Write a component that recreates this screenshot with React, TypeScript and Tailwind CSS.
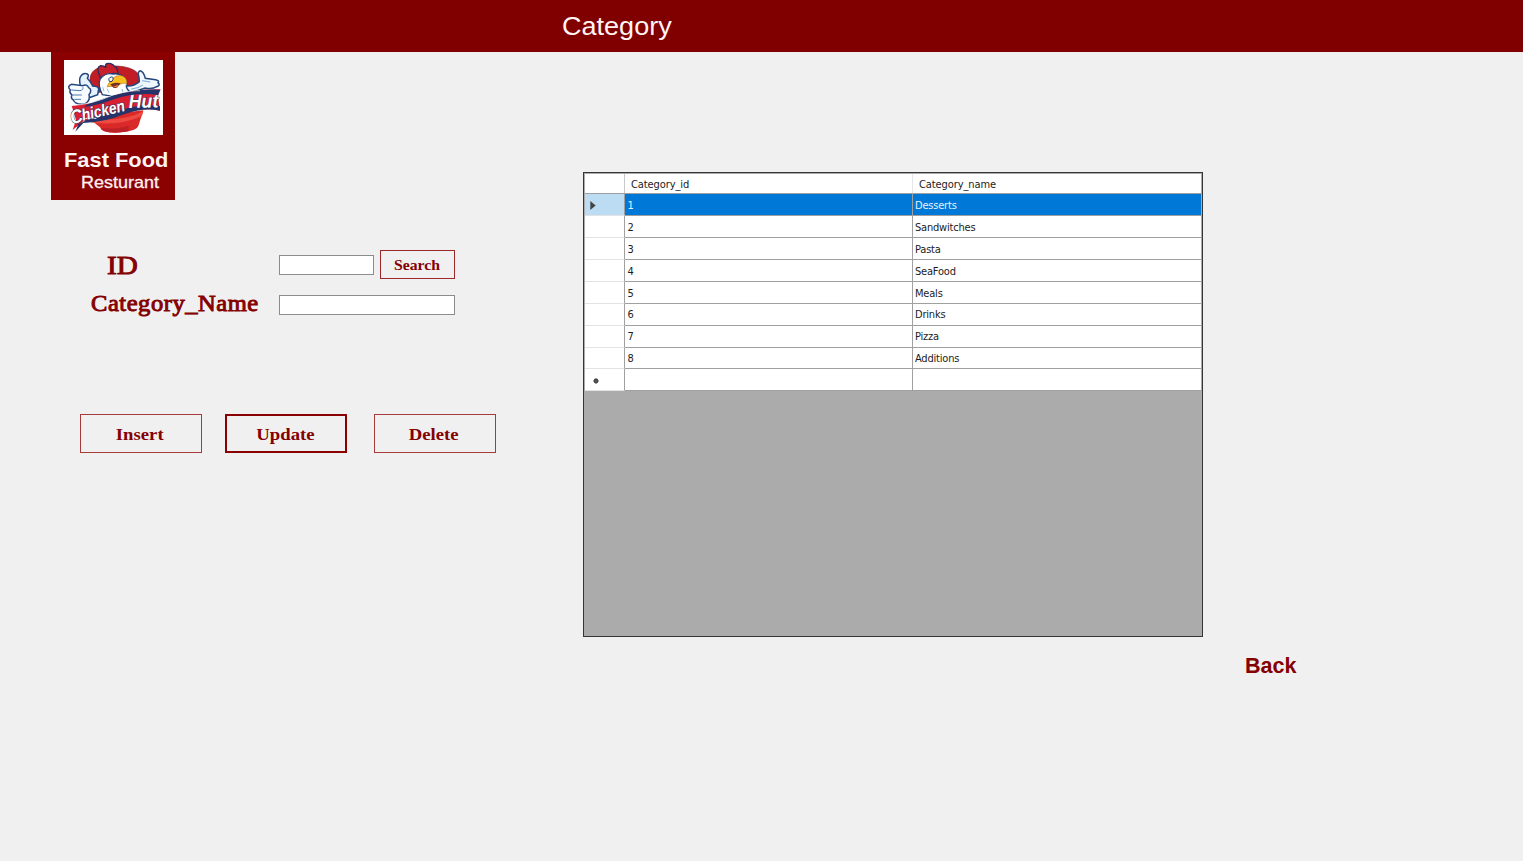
const rows: [string, string][] = [
  ['1', 'Desserts'],
  ['2', 'Sandwitches'],
  ['3', 'Pasta'],
  ['4', 'SeaFood'],
  ['5', 'Meals'],
  ['6', 'Drinks'],
  ['7', 'Pizza'],
  ['8', 'Additions'],
  ['', ''],
];

const serif = "font-['Liberation_Serif',serif] text-[#850000]";
const sans = "font-['Liberation_Sans',sans-serif]";

function Logo() {
  return (
    <svg viewBox="12 14 297 225" preserveAspectRatio="none" className="block h-[75px] w-[99px] bg-white">
      {/* red disc behind the head */}
      <path d="M90 78C88 48 110 33 145 33C195 28 240 42 243 75L238 105L95 112Z" fill="#c21c24" stroke="#7d2330" strokeWidth="2" />
      {/* cup */}
      <path d="M82 185L250 165L236 209Q232 229 170 232Q125 234 120 216Z" fill="#da2929" />
      <path d="M82 186Q180 205 250 168L246 182Q175 214 92 201Z" fill="#ef4a42" />
      <path d="M122 218Q170 223 206 211L205 228Q135 239 122 218Z" fill="#bd2027" />
      {/* comb */}
      <path d="M119 60Q107 36 122 31Q133 31 138 37Q133 24 146 24Q158 24 164 34Q174 38 174 56Q151 50 135 65Q127 72 121 67Z" fill="#c91f2b" stroke="#252e60" strokeWidth="4" />
      {/* head and chest */}
      <path d="M120 72Q136 50 160 56Q182 54 192 67Q204 79 201 94L218 115L165 124L127 118Q113 90 120 72Z" fill="#fff" stroke="#233e78" strokeWidth="4" />
      <path d="M132 108L128 96M147 112L141 100M189 113L186 101" stroke="#89bce2" strokeWidth="3" />
      {/* beak and eye */}
      <path d="M155 75Q163 58 186 61Q202 67 201 86Q186 79 174 92L141 94Q147 79 155 75Z" fill="#f9bf22" stroke="#a86018" strokeWidth="1.5" />
      <path d="M151 87Q169 80 182 84L174 92Q174 100 160 97Z" fill="#713127" />
      <path d="M157 95L174 88L172 96Z" fill="#ed7a3c" />
      <path d="M149 79Q142 68 154 65Q164 64 156 78Z" fill="#fff" stroke="#243564" strokeWidth="3" />
      {/* pointing hand */}
      <path d="M66 103Q56 83 60 67Q68 51 82 56Q88 59 82 69Q92 79 98 92Q114 92 116 101L113 118L85 128Z" fill="#e5f1fb" stroke="#234781" strokeWidth="4.5" />
      <path d="M31 104Q20 93 34 87L69 91Q80 85 86 97Q98 103 87 118Q92 133 77 145Q48 151 40 134Q31 129 36 119Q27 111 31 104Z" fill="#f8fcff" stroke="#234781" strokeWidth="4.5" />
      <path d="M35 104L60 106Q71 104 69 97M39 119H64M44 132H62" fill="none" stroke="#4a78b5" strokeWidth="3" strokeLinecap="round" />
      {/* open hand */}
      <path d="M199 92Q221 94 238 79L237 66Q231 49 241 46Q251 49 256 69L287 73Q300 76 294 82Q303 90 290 94Q277 103 255 98L214 112Q200 104 199 92Z" fill="#f0f7fd" stroke="#24477d" strokeWidth="4.5" />
      <path d="M246 76L271 80M214 101Q236 99 249 89" fill="none" stroke="#78acd7" strokeWidth="3" />
      {/* banner */}
      <path d="M35 151Q97 147 152 125Q209 101 302 102L294 121L300 166Q249 154 190 175Q131 202 72 196L38 224L48 194Z" fill="#d91f31" />
      <path d="M82 147Q150 122 174 117Q220 101 300 103L294 119Q230 109 164 131Q115 150 73 155Z" fill="#24346b" />
      <path d="M105 182Q157 177 203 158Q254 145 300 153V166Q251 155 192 177Q138 200 70 203L46 229L55 207Z" fill="#24346b" />
      <path d="M28 151Q98 148 161 118Q212 105 240 106" fill="none" stroke="#fff" strokeWidth="2" />
      <path d="M38 208Q58 184 109 189" fill="none" stroke="#fff" strokeWidth="3" />
      <g fontFamily="Liberation Sans, sans-serif" fontWeight="700" fontStyle="italic" fill="#fff" stroke="#202b61" strokeWidth="3" paintOrder="stroke">
        <text transform="translate(36 207) rotate(-14)" fontSize="58" textLength="36" lengthAdjust="spacingAndGlyphs">C</text>
        <text transform="translate(69 196) rotate(-13)" fontSize="49" textLength="132" lengthAdjust="spacingAndGlyphs">hicken</text>
        <text transform="translate(206 158) rotate(-1)" fontSize="57" textLength="89" lengthAdjust="spacingAndGlyphs">Hut</text>
      </g>
    </svg>
  );
}

function Brand() {
  return (
    <div className="ml-[51px] flex h-[148px] w-[124px] flex-col bg-[#8b0000] pt-2 pl-[12.5px]">
      <Logo />
      <div className={`${sans} mt-[13px] ml-[0.5px] text-[21px] leading-6 font-bold whitespace-nowrap text-[#fff4f4]`}>
        <span className="inline-block origin-left scale-x-[1.04]">Fast Food</span>
      </div>
      <div className={`${sans} mt-px ml-[17.5px] text-[17px] leading-5 whitespace-nowrap text-[#fff0f0]`}>
        <span className="inline-block origin-left scale-x-[1.06] [-webkit-text-stroke:0.3px_#fff0f0]">Resturant</span>
      </div>
    </div>
  );
}

function ActionButton({ label, active = false, className = '' }: { label: string; active?: boolean; className?: string }) {
  return (
    <button
      className={`${serif} ${className} flex h-[39px] w-[122px] items-center justify-center pt-0.5 text-[17px] font-bold ${
        active ? 'border-2 border-[#8b0000]' : 'border border-[#a63b3b]'
      }`}
    >
      <span className="-translate-x-px scale-x-[1.1]">{label}</span>
    </button>
  );
}

function CategoryForm() {
  return (
    <div className="mt-[50px]">
      <div className="flex h-[29px] items-center">
        <label className={`${serif} w-[279px] pt-0.5 pl-[107px] text-[26px] leading-7`}>
          <span className="inline-block origin-left scale-x-[1.12] [-webkit-text-stroke:0.9px_#850000]">ID</span>
        </label>
        <input aria-label="ID" className="h-5 w-[95px] border border-[#8c8c8c] bg-white px-1 text-xs outline-none" />
        <button className={`${serif} ml-[6px] flex h-[29px] w-[75px] items-center justify-center border border-[#9b2929] pt-0.5 text-[15px] font-bold`}>
          <span className="-translate-x-px scale-x-[1.05]">Search</span>
        </button>
      </div>
      <div className="mt-[12px] flex h-6 items-center">
        <label className={`${serif} w-[279px] pt-0.5 pl-[91px] text-[22.5px] leading-6 whitespace-nowrap`}>
          <span className="inline-block origin-left scale-x-[1.09] tracking-[0.5px] [-webkit-text-stroke:0.9px_#850000]">Category_Name</span>
        </label>
        <input aria-label="Category name" className="mt-[3px] h-5 w-[176px] border border-[#8c8c8c] bg-white px-1 text-xs outline-none" />
      </div>
      <div className="mt-[99px] flex pl-20">
        <ActionButton label="Insert" />
        <ActionButton label="Update" active className="ml-[23px]" />
        <ActionButton label="Delete" className="ml-[27px]" />
      </div>
    </div>
  );
}

function RowMarker({ index }: { index: number }) {
  if (index === 0) {
    return (
      <svg viewBox="0 0 6 10" className="mt-0.5 ml-[5px] h-[9px] w-[6px]">
        <path d="M0 0L6 5L0 10Z" fill="#444" />
      </svg>
    );
  }
  if (index === rows.length - 1) {
    return (
      <svg viewBox="0 0 8 8" className="mt-[3px] ml-[7px] h-2 w-2">
        <circle cx="4" cy="4" r="2.4" fill="#444" />
        <path d="M4 1V7M1 4H7M2 2L6 6M2 6L6 2" stroke="#555" strokeWidth=".7" />
      </svg>
    );
  }
  return null;
}

function CategoryTable() {
  return (
    <div className="mt-[120px] h-[465px] w-[620px] border border-[#353535] bg-[#ababab] pt-px pl-px font-['DejaVu_Sans_Condensed','DejaVu_Sans',sans-serif] text-[11px] tracking-[-0.2px] text-[#1c1c1c]">
      <div className="flex h-[20.3px] w-[616px] border-b border-[#a0a0a0] bg-white">
        <div className="w-10 border-r border-[#c8c8c8]" />
        <div className="flex w-[288px] items-center border-r border-[#e5e5e5] pt-[3px] pl-1.5 tracking-[-0.1px]">Category_id</div>
        <div className="flex items-center pt-[3px] pl-1.5 tracking-[-0.1px]">Category_name</div>
      </div>
      {rows.map(([id, name], i) => (
        <div key={i} className="flex h-[21.9px] w-[616px]">
          <div className={`flex w-10 items-center border-r border-r-[#a0a0a0] border-b border-b-[#e3e3e3] ${i === 0 ? 'bg-[#bcdcf4]' : 'bg-white'}`}>
            <RowMarker index={i} />
          </div>
          <div className={`flex w-[288px] items-center border-r border-b border-[#a0a0a0] pt-[3px] pl-[2.5px] ${i === 0 ? 'bg-[#0078d7] text-[#e4f3ff]' : 'bg-white'}`}>
            {id}
          </div>
          <div className={`flex flex-1 items-center border-b border-[#a0a0a0] pt-[3px] pl-0.5 ${i === 0 ? 'bg-[#0078d7] text-[#e4f3ff]' : 'bg-white'}`}>
            {name}
          </div>
        </div>
      ))}
    </div>
  );
}

export default function App() {
  return (
    <div className="flex h-screen flex-col overflow-hidden bg-[#f0f0f0]">
      <header className={`${sans} h-[52px] shrink-0 bg-[#800000] pl-[562px] text-[26.5px] leading-[52px] text-[#fff4f4]`}>
        <span className="inline-block origin-left scale-x-[1.02]">Category</span>
      </header>
      <main className="flex flex-1 items-start">
        <section className="w-[583px] shrink-0">
          <Brand />
          <CategoryForm />
        </section>
        <section>
          <CategoryTable />
          <button className={`${sans} mt-[15px] ml-[661.5px] block text-[22px] leading-7 font-bold text-[#850000]`}>
            <span className="inline-block origin-left scale-x-[0.98]">Back</span>
          </button>
        </section>
      </main>
    </div>
  );
}
